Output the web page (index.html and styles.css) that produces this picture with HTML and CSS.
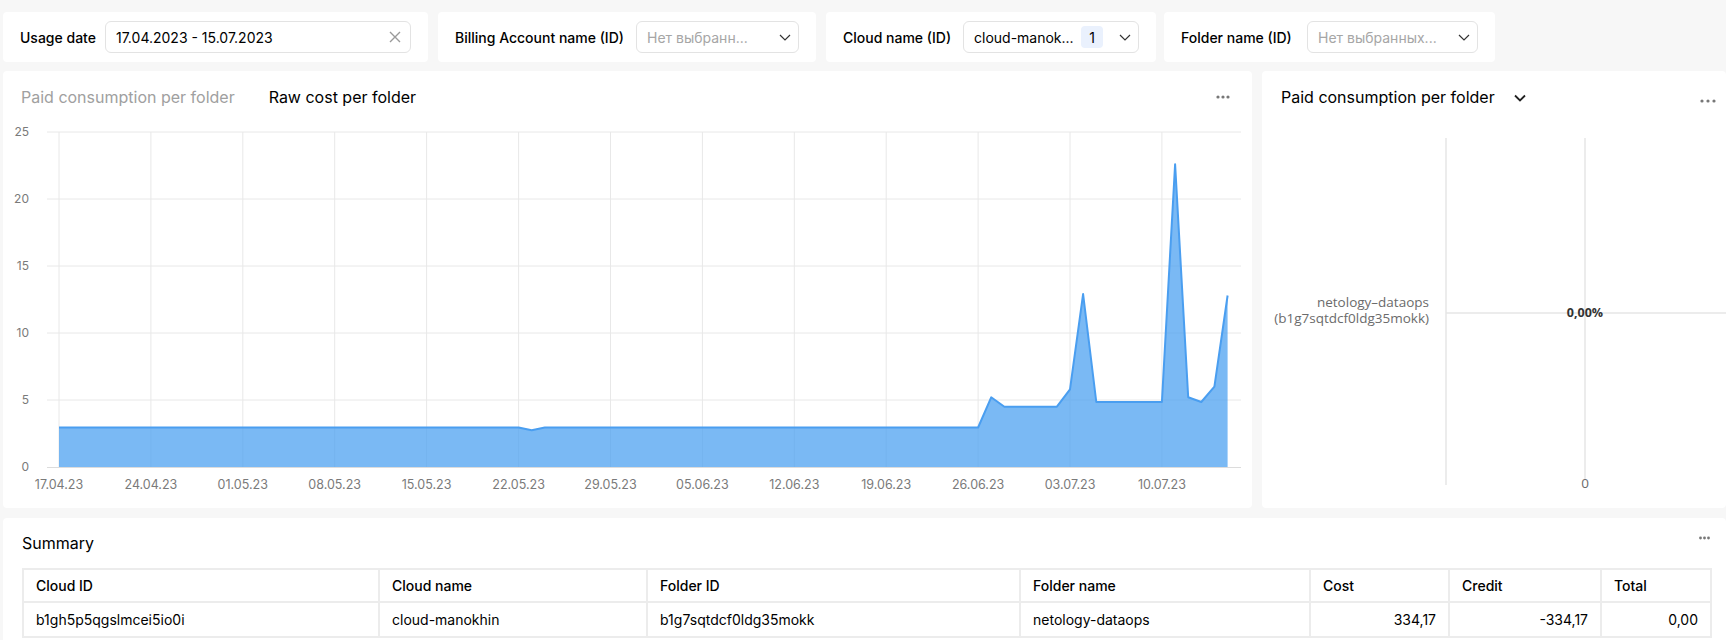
FILE: index.html
```html
<!DOCTYPE html>
<html lang="en">
<head>
<meta charset="utf-8">
<title>Billing dashboard</title>
<link rel="stylesheet" href="styles.css">
</head>
<body>
<div class="page">
  <div class="filters">
    <div class="fcard f-date">
      <span class="flabel">Usage date</span>
      <div class="input in-date">
        <span class="in-text">17.04.2023 - 15.07.2023</span>
        <svg class="ic-x" width="12" height="12" viewBox="0 0 12 12"><path d="M1 1L11 11M11 1L1 11" stroke="#9a9a9a" stroke-width="1.4" fill="none"/></svg>
      </div>
    </div>
    <div class="fcard f-bill">
      <span class="flabel">Billing Account name (ID)</span>
      <div class="input in-bill">
        <span class="in-text ph">Нет выбранн...</span>
        <svg class="ic-chev" width="12" height="7" viewBox="0 0 12 7"><path d="M1 1L6 6L11 1" stroke="#333" stroke-width="1.2" fill="none"/></svg>
      </div>
    </div>
    <div class="fcard f-cloud">
      <span class="flabel">Cloud name (ID)</span>
      <div class="input in-cloud">
        <span class="in-text">cloud-manok...</span>
        <span class="badge">1</span>
        <svg class="ic-chev" width="12" height="7" viewBox="0 0 12 7"><path d="M1 1L6 6L11 1" stroke="#333" stroke-width="1.2" fill="none"/></svg>
      </div>
    </div>
    <div class="fcard f-folder">
      <span class="flabel">Folder name (ID)</span>
      <div class="input in-folder">
        <span class="in-text ph">Нет выбранных...</span>
        <svg class="ic-chev" width="12" height="7" viewBox="0 0 12 7"><path d="M1 1L6 6L11 1" stroke="#333" stroke-width="1.2" fill="none"/></svg>
      </div>
    </div>
  </div>

  <div class="charts">
    <div class="card main-chart">
      <div class="chart-head">
        <span class="tab tab-off">Paid consumption per folder</span>
        <span class="tab tab-on">Raw cost per folder</span>
        <svg class="dots" width="14" height="4" viewBox="0 0 14 4"><circle cx="2" cy="2" r="1.6" fill="#777"/><circle cx="7" cy="2" r="1.6" fill="#777"/><circle cx="12" cy="2" r="1.6" fill="#777"/></svg>
      </div>
      <svg class="area-chart" width="1249" height="390" viewBox="0 0 1249 390">
        <g stroke="#e8e8e8" stroke-width="1">
          <line x1="44" y1="14" x2="1238" y2="14"/>
          <line x1="44" y1="81" x2="1238" y2="81"/>
          <line x1="44" y1="148" x2="1238" y2="148"/>
          <line x1="44" y1="215" x2="1238" y2="215"/>
          <line x1="44" y1="282" x2="1238" y2="282"/>
          <line x1="56" y1="14" x2="56" y2="349"/>
          <line x1="147.9" y1="14" x2="147.9" y2="349"/>
          <line x1="239.8" y1="14" x2="239.8" y2="349"/>
          <line x1="331.7" y1="14" x2="331.7" y2="349"/>
          <line x1="423.6" y1="14" x2="423.6" y2="349"/>
          <line x1="515.6" y1="14" x2="515.6" y2="349"/>
          <line x1="607.5" y1="14" x2="607.5" y2="349"/>
          <line x1="699.4" y1="14" x2="699.4" y2="349"/>
          <line x1="791.3" y1="14" x2="791.3" y2="349"/>
          <line x1="883.2" y1="14" x2="883.2" y2="349"/>
          <line x1="975.1" y1="14" x2="975.1" y2="349"/>
          <line x1="1067" y1="14" x2="1067" y2="349"/>
          <line x1="1158.9" y1="14" x2="1158.9" y2="349"/>
        </g>
        <path d="M56 309.5 L515.6 309.5 L528.7 312.2 L541.8 309.5 L975.1 309.5 L988.2 279.3 L1001.4 288.7 L1053.9 288.7 L1067 271.3 L1080.1 176.1 L1093.3 284 L1158.9 284 L1172.1 46.2 L1185.2 279.3 L1198.3 284 L1211.4 268.6 L1224.6 177.5 L1224.6 349 L56 349 Z" fill="rgba(76,160,240,0.74)"/>
        <path d="M56 309.5 L515.6 309.5 L528.7 312.2 L541.8 309.5 L975.1 309.5 L988.2 279.3 L1001.4 288.7 L1053.9 288.7 L1067 271.3 L1080.1 176.1 L1093.3 284 L1158.9 284 L1172.1 46.2 L1185.2 279.3 L1198.3 284 L1211.4 268.6 L1224.6 177.5" fill="none" stroke="#4a9ef0" stroke-width="2" stroke-linejoin="round"/>
        <line x1="44" y1="349.5" x2="1238" y2="349.5" stroke="#dcdcdc" stroke-width="1"/>
        <g class="ylab" text-anchor="end">
          <text x="26" y="18">25</text>
          <text x="26" y="85">20</text>
          <text x="26" y="152">15</text>
          <text x="26" y="219">10</text>
          <text x="26" y="286">5</text>
          <text x="26" y="353">0</text>
        </g>
        <g class="xlab" text-anchor="middle">
          <text x="56" y="371">17.04.23</text>
          <text x="147.9" y="371">24.04.23</text>
          <text x="239.8" y="371">01.05.23</text>
          <text x="331.7" y="371">08.05.23</text>
          <text x="423.6" y="371">15.05.23</text>
          <text x="515.6" y="371">22.05.23</text>
          <text x="607.5" y="371">29.05.23</text>
          <text x="699.4" y="371">05.06.23</text>
          <text x="791.3" y="371">12.06.23</text>
          <text x="883.2" y="371">19.06.23</text>
          <text x="975.1" y="371">26.06.23</text>
          <text x="1067" y="371">03.07.23</text>
          <text x="1158.9" y="371">10.07.23</text>
        </g>
      </svg>
    </div>

    <div class="card side-chart">
      <div class="chart-head side-head">
        <span class="tab tab-on">Paid consumption per folder</span>
        <svg class="title-chev" width="12" height="8" viewBox="0 0 12 8"><path d="M1 1.5L6 6.5L11 1.5" stroke="#222" stroke-width="1.8" fill="none"/></svg>
        <svg class="dots side-dots" width="16" height="4" viewBox="0 0 16 4"><circle cx="2" cy="2" r="1.6" fill="#777"/><circle cx="8" cy="2" r="1.6" fill="#777"/><circle cx="14" cy="2" r="1.6" fill="#777"/></svg>
      </div>
      <svg class="bar-chart" width="464" height="390" viewBox="0 0 464 390">
        <line x1="184" y1="20" x2="184" y2="367" stroke="#e6e6e6" stroke-width="1.5"/>
        <line x1="323" y1="20" x2="323" y2="362" stroke="#e6e6e6" stroke-width="1.5"/>
        <line x1="184" y1="195" x2="464" y2="195" stroke="#e6e6e6" stroke-width="1.5"/>
        <g class="blab" text-anchor="end">
          <text x="167" y="189">netology–dataops</text>
          <text x="167" y="205">(b1g7sqtdcf0ldg35mokk)</text>
        </g>
        <text class="bval" x="323" y="199" text-anchor="middle">0,00%</text>
        <text class="blab" x="323" y="370" text-anchor="middle">0</text>
      </svg>
    </div>
  </div>

  <div class="card summary">
    <div class="sum-head">
      <span class="sum-title">Summary</span>
      <svg class="dots" width="11" height="4" viewBox="0 0 11 4"><circle cx="1.5" cy="2" r="1.4" fill="#777"/><circle cx="5.5" cy="2" r="1.4" fill="#777"/><circle cx="9.5" cy="2" r="1.4" fill="#777"/></svg>
    </div>
    <table class="tbl">
      <colgroup>
        <col class="c1"><col class="c2"><col class="c3"><col class="c4"><col class="c5"><col class="c6"><col class="c7">
      </colgroup>
      <thead>
        <tr><th>Cloud ID</th><th>Cloud name</th><th>Folder ID</th><th>Folder name</th><th>Cost</th><th>Credit</th><th>Total</th></tr>
      </thead>
      <tbody>
        <tr><td>b1gh5p5qgslmcei5io0i</td><td>cloud-manokhin</td><td>b1g7sqtdcf0ldg35mokk</td><td>netology-dataops</td><td class="num">334,17</td><td class="num">-334,17</td><td class="num">0,00</td></tr>
      </tbody>
    </table>
  </div>
</div>
</body>
</html>
```

FILE: styles.css
```css
* { box-sizing: border-box; }
html, body { margin: 0; padding: 0; }
body {
  background: #f7f7f7;
  font-family: "Inter", "Roboto", "Liberation Sans", sans-serif;
  color: #000;
  overflow: hidden;
}
.page {
  padding: 12px 0 0 3px;
  display: flex;
  flex-direction: column;
  gap: 9px;
}

/* Filters */
.filters { display: flex; gap: 10px; }
.fcard {
  background: #fff;
  border-radius: 4px;
  height: 50px;
  padding: 0 17px;
  display: flex;
  align-items: center;
  justify-content: space-between;
}
.f-date { width: 425px; }
.f-bill { width: 378px; }
.f-cloud { width: 330px; }
.f-folder { width: 331px; margin-left: -2px; }
.flabel { font-size: 14px; font-weight: 500; white-space: nowrap; }
.input {
  height: 32px;
  border: 1px solid #e3e3e3;
  border-radius: 6px;
  display: flex;
  align-items: center;
  padding: 0 7px 0 10px;
  font-size: 14px;
}
.in-date { width: 306px; padding-right: 9px; }
.in-bill { width: 163px; }
.in-cloud { width: 176px; }
.in-folder { width: 171px; }
.in-text { flex: 1; white-space: nowrap; overflow: hidden; }
.ph { color: #a6a6a6; }
.badge {
  width: 22px;
  height: 22px;
  background: #eaf1fd;
  border-radius: 4px;
  display: flex;
  align-items: center;
  justify-content: center;
  margin-right: 16px;
  font-size: 14px;
}
.ic-chev, .ic-x { flex: none; }

/* Charts */
.charts { display: flex; gap: 10px; }
.card { background: #fff; border-radius: 4px; }
.main-chart { width: 1249px; height: 437px; flex: none; }
.side-chart { flex: 1; height: 437px; overflow: hidden; }
.chart-head {
  display: flex;
  align-items: center;
  padding: 16px 22px 11px 18px;
  height: 47px;
}
.tab { font-size: 16px; line-height: 20px; white-space: nowrap; }
.tab-off { color: #a0a0a0; margin-right: 34px; }
.tab-on { color: #000; }
.dots { margin-left: auto; }
.side-head { padding-left: 19px; padding-right: 10px; }
.title-chev { margin-left: 19px; margin-top: 1px; }
.side-dots { margin-top: 8px; }
.area-chart, .bar-chart { display: block; }
.ylab text {
  font-family: "Inter", "Roboto", sans-serif;
  font-size: 12px;
  fill: #7a7a7a;
}
.xlab text {
  font-family: "Inter", "Roboto", sans-serif;
  font-size: 12.5px;
  fill: #7a7a7a;
}
.blab, .blab text {
  font-family: "Open Sans", "DejaVu Sans", sans-serif;
  font-size: 13.5px;
  fill: #6b6b6b;
}
.bval {
  font-family: "Open Sans", "DejaVu Sans", sans-serif;
  font-size: 12.5px;
  font-weight: 700;
  fill: #333;
}

/* Summary */
.summary { margin-top: 1px; padding: 0 16px 0 19px; height: 200px; }
.sum-head {
  display: flex;
  align-items: flex-start;
  padding-top: 15px;
  height: 50px;
}
.sum-title { font-size: 16px; line-height: 20px; }
.sum-head .dots { margin-top: 3px; }
.tbl {
  width: 1688px;
  border-collapse: collapse;
  table-layout: fixed;
  font-size: 14px;
}
.c1 { width: 356px; }
.c2 { width: 268px; }
.c3 { width: 373px; }
.c4 { width: 290px; }
.c5 { width: 139px; }
.c6 { width: 152px; }
.c7 { width: 110px; }
.tbl th, .tbl td {
  border: 2px solid #ececec;
  text-align: left;
  padding: 0 12px;
  white-space: nowrap;
}
.tbl th { font-weight: 500; height: 33px; }
.tbl td { height: 35px; }
.tbl td.num { text-align: right; }
```
